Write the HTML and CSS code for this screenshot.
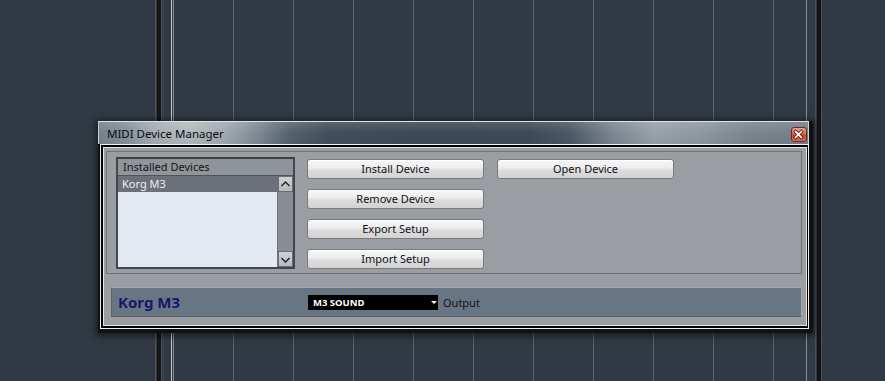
FILE: index.html
```html
<!DOCTYPE html>
<html lang="en">
<head>
    <meta charset="UTF-8">
    <title>MIDI Device Manager</title>
    <link rel="stylesheet" href="styles.css">
</head>
<body>
    <div class="project">
        <div class="inspector"></div>
        <div class="divider"></div>
        <div class="lane"></div>
        <div class="lane"></div>
        <div class="lane"></div>
        <div class="lane"></div>
        <div class="lane"></div>
        <div class="lane"></div>
        <div class="lane"></div>
        <div class="lane"></div>
        <div class="lane"></div>
        <div class="lane lane-last"></div>
        <div class="edge"></div>
    </div>

    <div class="dialog">
        <div class="titlebar">
            <span class="title">MIDI Device Manager</span>
            <span class="close">
                <svg width="16" height="15" viewBox="0 0 16 15">
                    <path d="M5 4.5 L11 10.5 M11 4.5 L5 10.5" stroke="#5b2417" stroke-width="3.6" stroke-linecap="square"/>
                    <path d="M5 4.5 L11 10.5 M11 4.5 L5 10.5" stroke="#ffffff" stroke-width="1.8" stroke-linecap="square"/>
                </svg>
            </span>
        </div>

        <div class="client">
            <div class="client-inner">
                <div class="panel">
                    <div class="device-list">
                        <div class="list-header">Installed Devices</div>
                        <div class="list-body">
                            <div class="list-items">
                                <div class="list-item selected">Korg M3</div>
                            </div>
                            <div class="scrollbar">
                                <div class="scroll-btn">
                                    <svg width="13" height="14" viewBox="0 0 13 14">
                                        <polyline points="2.5,9 6.5,5 10.5,9" fill="none" stroke="#1e1f21" stroke-width="1.4"/>
                                    </svg>
                                </div>
                                <div class="scroll-btn">
                                    <svg width="13" height="14" viewBox="0 0 13 14">
                                        <polyline points="2.5,6 6.5,10 10.5,6" fill="none" stroke="#1e1f21" stroke-width="1.4"/>
                                    </svg>
                                </div>
                            </div>
                        </div>
                    </div>

                    <div class="button-column">
                        <button class="btn">Install Device</button>
                        <button class="btn">Remove Device</button>
                        <button class="btn">Export Setup</button>
                        <button class="btn">Import Setup</button>
                    </div>

                    <div class="button-column">
                        <button class="btn">Open Device</button>
                    </div>
                </div>

                <div class="device-bar">
                    <span class="device-name">Korg M3</span>
                    <div class="output-select">M3 SOUND<span class="caret"></span></div>
                    <span class="output-label">Output</span>
                </div>
            </div>
        </div>
    </div>
</body>
</html>
```

FILE: styles.css
```css
body {
    margin: 0;
    width: 885px;
    height: 381px;
    overflow: hidden;
    background-color: #313a44;
    font-family: "Noto Sans", "Open Sans", sans-serif;
    font-size: 11px;
    color: #141418;
}

/* project window behind the dialog */

.project {
    display: flex;
    height: 381px;
}

.inspector {
    width: 155px;
}

.divider {
    width: 78px;
    background: linear-gradient(to right,
        #4b535c 0 1px, transparent 1px 2px,
        #141715 2px 6px, #4a525a 6px 7px,
        transparent 7px 8px, #3c444d 8px 9px,
        transparent 9px 16px, #c8ccd0 16px 17px,
        transparent 17px 18px, #878d93 18px 19px,
        transparent 19px);
}

.lane {
    width: 60px;
    border-left: 1px solid #566572;
    box-sizing: border-box;
}

.lane-last {
    width: 33px;
}

.edge {
    flex: 1;
    border-left: 1px solid #8a9096;
    background: linear-gradient(to right,
        transparent 0 8px, #49515a 8px 9px,
        transparent 9px 10px, #121513 10px 14px,
        #4b545f 14px 15px, transparent 15px);
}

/* dialog window */

.dialog {
    position: absolute;
    left: 98px;
    top: 121px;
    width: 715px;
    height: 212px;
    box-sizing: border-box;
    padding: 0 4px 4px 0;
    background-color: #0f1113;
    box-shadow: 0 1px 7px 2px rgba(0, 0, 0, 0.55);
}

.titlebar {
    display: flex;
    align-items: center;
    justify-content: space-between;
    height: 23px;
    box-sizing: border-box;
    padding: 0 1px 0 8px;
    border-top: 1px solid #dfe3e6;
    border-left: 1px solid #c9ced2;
    border-right: 1px solid #cfd4d8;
    background:
        linear-gradient(rgba(255, 255, 255, 0.12), rgba(255, 255, 255, 0) 50%, rgba(0, 0, 0, 0.04)),
        linear-gradient(to right,
            #75818c 0, #838e97 25px, #a6aeb3 55px, #b4bbbf 90px,
            #a2aab0 125px, #7d8893 160px, #56636f 190px, #414f5c 230px,
            #3c4a57 320px, #3d4b58 430px, #4b5865 470px, #7c8791 515px,
            #99a1a8 555px, #8f989f 600px, #7b858e 650px, #737e88 711px);
}

.title {
    font-size: 11.5px;
    color: #0b0c0e;
}

.close {
    display: flex;
    margin-top: 3px;
    width: 16px;
    height: 15px;
    box-sizing: border-box;
    border: 1px solid #6b2c1f;
    border-radius: 3px;
    background: linear-gradient(#eba08c, #d9694f 45%, #c7462c 55%, #dc6a4c);
}

.close svg {
    margin: -1px 0 0 -1px;
}

.client {
    margin-left: 2px;
    width: 709px;
    height: 185px;
    box-sizing: border-box;
    border: 1px solid #eef0f2;
    padding: 2px 1px 2px 2px;
    background-color: #000;
}

.client-inner {
    height: 100%;
    box-sizing: border-box;
    border: 1px solid #e3e5e7;
    background-color: #9a9ea3;
    padding-top: 3px;
}

.panel {
    display: flex;
    align-items: flex-start;
    margin: 0 4px 0 2px;
    height: 123px;
    box-sizing: border-box;
    border: 1px solid #6e7277;
    padding: 5px 0 0 9px;
}

/* installed devices list */

.device-list {
    width: 179px;
    height: 112px;
    box-sizing: border-box;
    border: 2px solid #43464b;
    border-top-color: #3c3f43;
    display: flex;
    flex-direction: column;
}

.list-header {
    height: 17px;
    line-height: 16px;
    box-sizing: border-box;
    padding-left: 5px;
    background-color: #90959a;
    border-bottom: 1px solid #505459;
    color: #141416;
}

.list-body {
    flex: 1;
    display: flex;
}

.list-items {
    flex: 1;
    background-color: #e4eaf1;
}

.list-item {
    height: 16px;
    line-height: 15px;
    padding-left: 4px;
}

.list-item.selected {
    background-color: #6c7179;
    color: #eef0f2;
}

.scrollbar {
    width: 16px;
    display: flex;
    flex-direction: column;
    justify-content: space-between;
    background-color: #898e93;
    border-left: 1px solid #6d7176;
    box-sizing: border-box;
}

.scroll-btn {
    height: 16px;
    box-sizing: border-box;
    border: 1px solid #6a6e73;
    background: linear-gradient(#d0d3d6, #b6babe);
    display: flex;
    align-items: center;
    justify-content: center;
}

/* buttons */

.button-column {
    display: flex;
    flex-direction: column;
    gap: 10px;
    margin: 2px 0 0 12px;
}

.button-column + .button-column {
    margin-left: 13px;
}

.btn {
    width: 177px;
    height: 20px;
    padding: 0 0 1px 0;
    border: 1px solid #777b80;
    border-radius: 3px;
    background: linear-gradient(#f7f7f7, #ececec 45%, #dcdcdc 55%, #d3d3d3);
    box-shadow: inset 0 1px 0 #ffffff;
    font-family: "Noto Sans", "Open Sans", sans-serif;
    font-size: 11px;
    color: #101018;
    line-height: 16px;
}

/* selected device bar */

.device-bar {
    display: flex;
    align-items: center;
    margin: 13px 4px 0 7px;
    height: 30px;
    box-sizing: border-box;
    border: 1px solid #5c6268;
    border-top-color: #9fa6ac;
    border-right-color: #a4aab0;
    background-color: #687684;
}

.device-name {
    width: 190px;
    padding-left: 6px;
    font-size: 15px;
    font-weight: bold;
    color: #17176b;
}

.output-select {
    position: relative;
    width: 130px;
    height: 15px;
    box-sizing: border-box;
    padding-left: 5px;
    background-color: #000;
    color: #fff;
    font-size: 9.5px;
    font-weight: bold;
    line-height: 15px;
}

.caret {
    position: absolute;
    right: 1px;
    top: 6px;
    border-left: 3px solid transparent;
    border-right: 3px solid transparent;
    border-top: 3px solid #fff;
}

.output-label {
    margin-left: 5px;
    color: #111214;
}
```
